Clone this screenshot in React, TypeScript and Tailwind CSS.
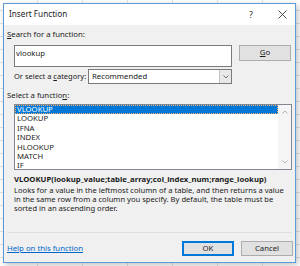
export default function App() {
  const fns = ["VLOOKUP", "LOOKUP", "IFNA", "INDEX", "HLOOKUP", "MATCH", "IF"];
  return (
    <div
      className="h-[266px] w-[300px] overflow-hidden bg-white bg-[linear-gradient(90deg,#e2e2e2_1px,transparent_1px),linear-gradient(#e2e2e2_1px,transparent_1px)] bg-[size:45px_13px] bg-[position:37px_10px] pl-[3px] pt-[3px] text-[7.75px] text-[#1b1b1b] [font-family:'Noto_Sans',sans-serif]"
    >
      <div className="flex h-[260px] w-[293px] flex-col border border-[#5b9bd9] bg-[#f0f0f0] shadow-[2px_2px_6px_rgba(0,0,0,0.25)]">
        {/* title bar */}
        <div className="flex h-[21px] shrink-0 items-center bg-white pl-[5px] pr-[8px] text-[8.2px]">
          <span className="flex-1">Insert Function</span>
          <span className="mr-[25px] text-[9px] text-[#333]">?</span>
          <svg width="9" height="9" viewBox="0 0 9 9" className="text-[#333]">
            <path d="M0.5 0.5L8.5 8.5M8.5 0.5L0.5 8.5" stroke="currentColor" strokeWidth="0.9" />
          </svg>
        </div>

        <div className="flex flex-1 flex-col pl-[3px] pr-[2px]">
          <div className="mt-[4px] h-[10px] shrink-0 leading-[10px]">
            <span className="underline">S</span>earch for a function:
          </div>

          <div className="ml-[7px] mt-[6px] flex shrink-0 items-start">
            <div className="h-[22px] w-[218px] border border-[#7a7a7a] bg-white pl-[1px] pt-[2px] leading-[10px]">
              vlookup
            </div>
            <div className="ml-[7px] flex h-[16px] w-[52px] items-center justify-center border border-[#adadad] bg-[#e1e1e1]">
              <span className="underline">G</span>o
            </div>
          </div>

          <div className="ml-[7px] mt-[2px] flex shrink-0 items-center">
            <span className="w-[74px] whitespace-nowrap text-[7.5px]">
              Or select a <span className="underline">c</span>ategory:
            </span>
            <div className="flex h-[15px] w-[144px] items-center border border-[#7a7a7a] bg-white">
              <span className="flex-1 pl-[3px]">Recommended</span>
              <div className="flex h-full w-[12px] items-center justify-center border-l border-[#c4c4c4] bg-[#e8e8e8]">
                <svg width="6" height="4" viewBox="0 0 6 4">
                  <path d="M0.5 0.5L3 3L5.5 0.5" fill="none" stroke="#555" strokeWidth="0.8" />
                </svg>
              </div>
            </div>
          </div>

          <div className="mt-[6px] h-[10px] shrink-0 leading-[10px]">
            Select a functio<span className="underline">n</span>:
          </div>

          <div className="ml-[7px] mt-[4px] flex h-[66px] w-[278px] shrink-0 border border-[#828790] bg-white">
            <div className="flex-1">
              {fns.map((f, i) => (
                <div
                  key={f}
                  className={
                    i === 0
                      ? "h-[9.4px] border border-dotted border-[#f5b070] bg-[#0078d7] pl-[1px] leading-[7.4px] text-white"
                      : "h-[9.4px] pl-[2px] leading-[9.4px]"
                  }
                >
                  {f}
                </div>
              ))}
            </div>
            <div className="flex w-[13px] flex-col items-center justify-between bg-[#f5f5f5] py-[5px]">
              <svg width="6" height="4" viewBox="0 0 6 4">
                <path d="M0.5 3.5L3 1L5.5 3.5" fill="none" stroke="#a0a0a0" strokeWidth="0.8" />
              </svg>
              <svg width="6" height="4" viewBox="0 0 6 4">
                <path d="M0.5 0.5L3 3L5.5 0.5" fill="none" stroke="#a0a0a0" strokeWidth="0.8" />
              </svg>
            </div>
          </div>

          <div className="ml-[7px] mt-[4px] h-[10px] shrink-0 whitespace-nowrap font-bold leading-[10px]">
            VLOOKUP(lookup_value;table_array;col_index_num;range_lookup)
          </div>
          <div className="ml-[7px] mt-[2px] shrink-0 whitespace-nowrap text-[7.6px] leading-[9px]">
            Looks for a value in the leftmost column of a table, and then returns a value
            <br />
            in the same row from a column you specify. By default, the table must be
            <br />
            sorted in an ascending order.
          </div>

          <div className="mt-auto h-px w-[285px] shrink-0 bg-[#dfdfdf]" />

          <div className="mb-[6px] mt-[8px] flex shrink-0 items-center">
            <span className="flex-1 text-[#0066cc] underline">Help on this function</span>
            <div className="flex h-[15px] w-[52px] items-center justify-center border border-[#0078d7] bg-[#e1e1e1] shadow-[inset_0_0_0_1px_#0078d7]">
              OK
            </div>
            <div className="ml-[7px] flex h-[15px] w-[52px] items-center justify-center border border-[#adadad] bg-[#e1e1e1]">
              Cancel
            </div>
          </div>
        </div>
      </div>
    </div>
  );
}
